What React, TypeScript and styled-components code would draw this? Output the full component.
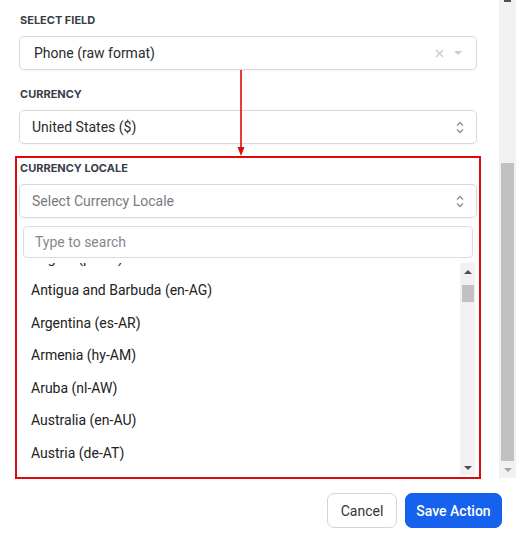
import React from "react";
import styled, { createGlobalStyle } from "styled-components";

const GlobalStyle = createGlobalStyle`
  html, body { margin: 0; padding: 0; background: #ffffff; }
  body { font-family: Roboto, "Noto Sans", "Liberation Sans", sans-serif; }
  * { box-sizing: border-box; }
`;

const Page = styled.div`
  width: 516px;
  height: 541px;
  display: flex;
  flex-direction: column;
  overflow: hidden;
  background: #fff;
`;

const Body = styled.div`
  height: 478px;
  display: flex;
  flex-direction: row;
`;

const Content = styled.div`
  position: relative;
  flex: 1;
  padding: 12px 22px 0 19px;
  display: flex;
  flex-direction: column;
  gap: 16px;
`;

const FieldGroup = styled.div<{ $highlight?: boolean }>`
  display: flex;
  flex-direction: column;
  outline: ${(p) => (p.$highlight ? "2px solid #dc0a0a" : "none")};
  outline-offset: 2px;
`;

const Label = styled.div`
  font-family: Inter, "Noto Sans", sans-serif;
  font-size: 11px;
  line-height: 16px;
  font-weight: 700;
  color: #393d48;
  text-transform: uppercase;
  margin: 0 0 8px 1px;
`;

const SelectBox = styled.div<{ $pad: number }>`
  height: 34px;
  border: 1px solid #d8d8d8;
  border-radius: 5px;
  display: flex;
  align-items: center;
  padding: 0 ${(p) => p.$pad}px 0 ${(p) => p.$pad}px;
  background: #fff;
  box-shadow: 0 1px 2px rgba(0, 0, 0, 0.04);
`;

const Value = styled.span<{ $placeholder?: boolean }>`
  flex: 1;
  font-size: 14px;
  color: ${(p) => (p.$placeholder ? "#777a80" : "#2b2b2b")};
  white-space: nowrap;
`;

const Indicators = styled.div`
  display: flex;
  align-items: center;
  gap: 10px;
`;

const Panel = styled.div`
  display: flex;
  flex-direction: column;
  padding: 8px 2px 0 4px;
`;

const SearchInput = styled.div`
  height: 32px;
  margin-right: 2px;
  border: 1px solid #dcdcdc;
  border-radius: 4px;
  display: flex;
  align-items: center;
  padding-left: 11px;
  font-size: 14px;
  color: #85888e;
`;

const ListArea = styled.div`
  margin-top: 5px;
  height: 212px;
  display: flex;
  flex-direction: row;
`;

const Viewport = styled.div`
  flex: 1;
  overflow: hidden;
`;

const ItemsTrack = styled.div<{ $scroll: number }>`
  margin-top: ${(p) => -p.$scroll}px;
  display: flex;
  flex-direction: column;
`;

const Item = styled.div`
  height: 32.5px;
  display: flex;
  align-items: center;
  padding-left: 8px;
  font-size: 14px;
  color: #222;
  white-space: nowrap;
`;

const ScrollTrack = styled.div<{ $w: number }>`
  width: ${(p) => p.$w}px;
  background: #f1f1f1;
  display: flex;
  flex-direction: column;
  align-items: center;
`;

const ArrowCell = styled.div<{ $h: number }>`
  height: ${(p) => p.$h}px;
  display: flex;
  align-items: center;
  justify-content: center;
`;

const Thumb = styled.div<{ $top: number; $h: number; $w: number }>`
  margin-top: ${(p) => p.$top}px;
  height: ${(p) => p.$h}px;
  width: ${(p) => p.$w}px;
  background: #c1c1c1;
`;

const Spacer = styled.div`
  flex: 1;
`;

const ArrowStub = styled.div`
  width: 7px;
  height: 2px;
  background: #505050;
`;

const Footer = styled.div`
  display: flex;
  justify-content: flex-end;
  gap: 8px;
  padding: 15px 14px 0 0;
`;

const Button = styled.button<{ $primary?: boolean; $w: number }>`
  width: ${(p) => p.$w}px;
  height: 35px;
  padding: 0;
  border-radius: 7px;
  font-family: Roboto, "Noto Sans", sans-serif;
  font-size: 14px;
  font-weight: ${(p) => (p.$primary ? 500 : 400)};
  color: ${(p) => (p.$primary ? "#ffffff" : "#333")};
  background: ${(p) => (p.$primary ? "#1662ee" : "#ffffff")};
  border: 1px solid ${(p) => (p.$primary ? "#1662ee" : "#d2d5da")};
  cursor: pointer;
`;

const AnnotationArrow = styled.svg`
  position: absolute;
  left: 236px;
  top: 70px;
  overflow: visible;
`;

const Triangle = ({ dir, color }: { dir: "up" | "down"; color: string }) => (
  <svg width="8" height="4" viewBox="0 0 8 4">
    <path d={dir === "up" ? "M0 4 L4 0 L8 4 Z" : "M0 0 L8 0 L4 4 Z"} fill={color} />
  </svg>
);

const Chevrons = () => (
  <svg width="8" height="13" viewBox="0 0 8 13">
    <path d="M1 4.5 L4 1.5 L7 4.5" fill="none" stroke="#8a8d93" strokeWidth="1.3" />
    <path d="M1 8.5 L4 11.5 L7 8.5" fill="none" stroke="#8a8d93" strokeWidth="1.3" />
  </svg>
);

const ClearIcon = () => (
  <svg width="9" height="9" viewBox="0 0 9 9">
    <path d="M1 1 L8 8 M8 1 L1 8" stroke="#cccccc" strokeWidth="1.5" />
  </svg>
);

const locales = [
  "Angola (pt-AO)",
  "Antigua and Barbuda (en-AG)",
  "Argentina (es-AR)",
  "Armenia (hy-AM)",
  "Aruba (nl-AW)",
  "Australia (en-AU)",
  "Austria (de-AT)",
  "Azerbaijan (az-AZ)",
];

export default function App() {
  return (
    <>
      <GlobalStyle />
      <Page>
        <Body>
          <Content>
            <FieldGroup>
              <Label>Select Field</Label>
              <SelectBox $pad={14}>
                <Value>Phone (raw format)</Value>
                <Indicators>
                  <ClearIcon />
                  <Triangle dir="down" color="#cccccc" />
                </Indicators>
              </SelectBox>
            </FieldGroup>

            <FieldGroup>
              <Label>Currency</Label>
              <SelectBox $pad={12}>
                <Value>United States ($)</Value>
                <Chevrons />
              </SelectBox>
            </FieldGroup>

            <FieldGroup $highlight>
              <Label>Currency Locale</Label>
              <SelectBox $pad={12}>
                <Value $placeholder>Select Currency Locale</Value>
                <Chevrons />
              </SelectBox>
              <Panel>
                <SearchInput>Type to search</SearchInput>
                <ListArea>
                  <Viewport>
                    <ItemsTrack $scroll={21.75}>
                      {locales.map((l) => (
                        <Item key={l}>{l}</Item>
                      ))}
                    </ItemsTrack>
                  </Viewport>
                  <ScrollTrack $w={15}>
                    <ArrowCell $h={17}>
                      <Triangle dir="up" color="#505050" />
                    </ArrowCell>
                    <Thumb $top={5} $h={17} $w={12} />
                    <Spacer />
                    <ArrowCell $h={14}>
                      <Triangle dir="down" color="#505050" />
                    </ArrowCell>
                  </ScrollTrack>
                </ListArea>
              </Panel>
            </FieldGroup>

            <AnnotationArrow width="10" height="87" viewBox="0 0 10 87">
              <line x1="5" y1="0" x2="5" y2="80" stroke="#dc0a0a" strokeWidth="1.6" />
              <path d="M1.5 77 L8.5 77 L5 86 Z" fill="#dc0a0a" />
            </AnnotationArrow>
          </Content>

          <ScrollTrack $w={17}>
            <ArrowStub />
            <Thumb $top={161} $h={298} $w={13} />
            <Spacer />
            <ArrowCell $h={17}>
              <Triangle dir="down" color="#a3a3a3" />
            </ArrowCell>
          </ScrollTrack>
        </Body>

        <Footer>
          <Button type="button" $w={70}>
            Cancel
          </Button>
          <Button type="button" $primary $w={97}>
            Save Action
          </Button>
        </Footer>
      </Page>
    </>
  );
}
